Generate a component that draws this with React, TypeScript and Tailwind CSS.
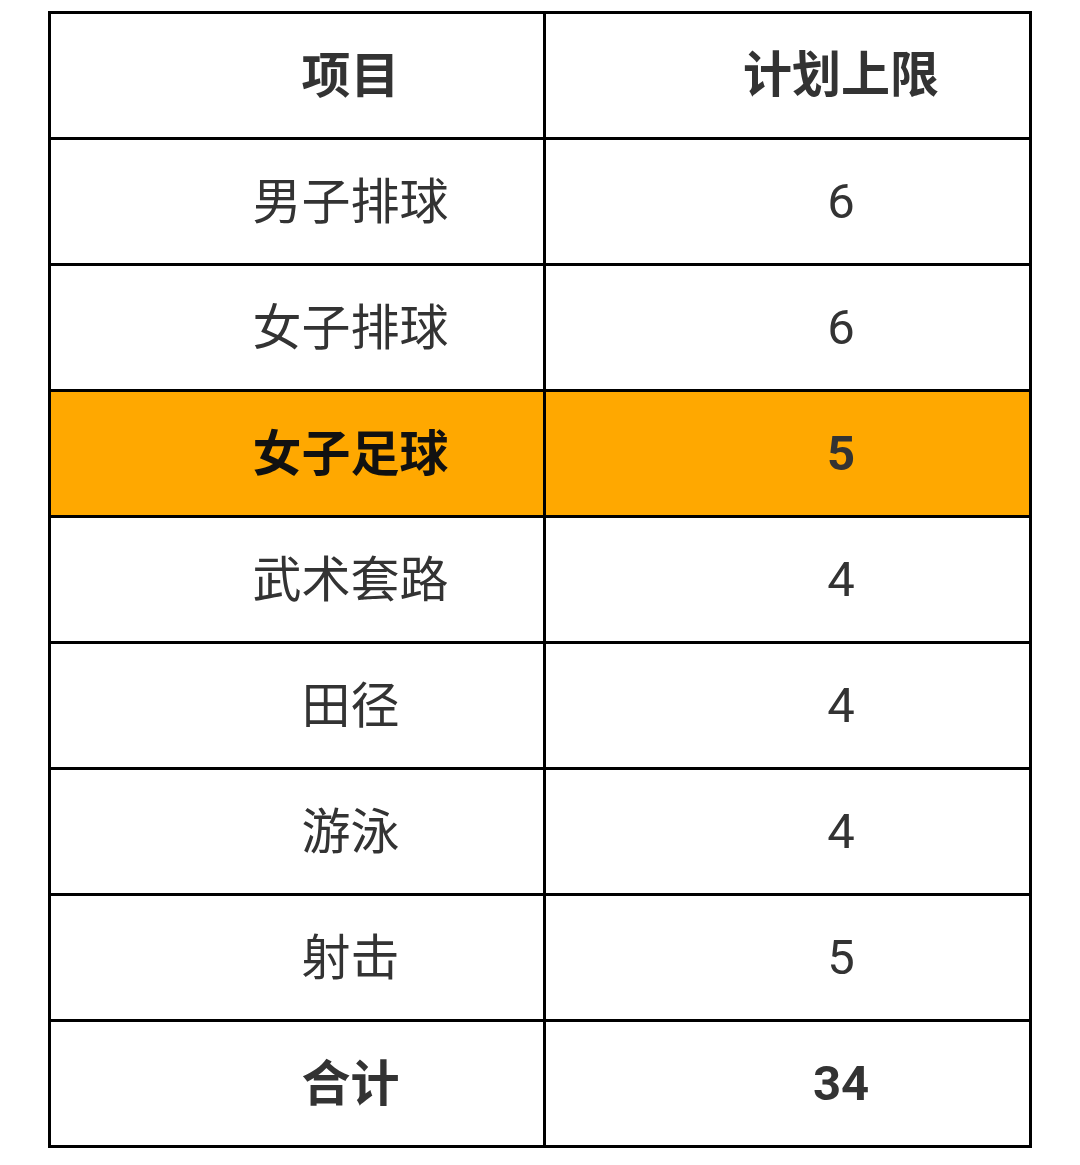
import React from "react";

type Row = { name: string; value: string; kind?: "header" | "hl" | "total" };

const rows: Row[] = [
  { name: "项目", value: "计划上限", kind: "header" },
  { name: "男子排球", value: "6" },
  { name: "女子排球", value: "6" },
  { name: "女子足球", value: "5", kind: "hl" },
  { name: "武术套路", value: "4" },
  { name: "田径", value: "4" },
  { name: "游泳", value: "4" },
  { name: "射击", value: "5" },
  { name: "合计", value: "34", kind: "total" },
];

export default function App() {
  return (
    <div
      className="w-[1080px] h-[1165px] bg-white pt-[11px] pl-[48px]"
      style={{ fontFamily: 'Roboto, "Noto Sans CJK SC", "Noto Sans", sans-serif' }}
    >
      <div className="w-[984px] border-[3px] border-black border-b-0">
        {rows.map((r, i) => {
          const bold = r.kind === "header" || r.kind === "total" || r.kind === "hl";
          const bg = r.kind === "hl" ? "bg-[#ffa800]" : "bg-white";
          const nameColor = r.kind === "hl" ? "text-[#111]" : "text-[#333]";
          return (
            <div
              key={i}
              className={`grid grid-cols-[495px_483px] h-[126px] border-b-[3px] border-black ${bg}`}
            >
              <div
                className={`flex items-center justify-center border-r-[3px] border-black pl-[107px] pt-[1px] text-[49px] leading-none ${nameColor} ${bold ? "font-bold" : "font-normal"}`}
              >
                {r.name}
              </div>
              <div
                className={`flex items-center justify-center pl-[107px] text-[49px] leading-none text-[#333] ${bold ? "font-bold" : "font-normal"}`}
              >
                {r.value}
              </div>
            </div>
          );
        })}
      </div>
    </div>
  );
}
